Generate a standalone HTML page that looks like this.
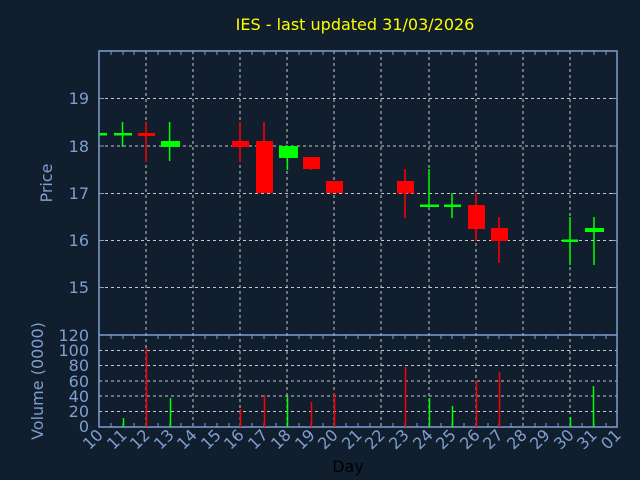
<!DOCTYPE html><html><head><style>html,body{margin:0;background:#101e2e;}svg{display:block}</style></head><body>
<svg width="640" height="480" xmlns="http://www.w3.org/2000/svg" font-family="DejaVu Sans, Liberation Sans, sans-serif">
<rect width="640" height="480" fill="#101e2e"/>
<text x="355" y="30" fill="#ffff00" font-size="16" text-anchor="middle">IES - last updated 31/03/2026</text>
<g stroke="#c8c8c8" stroke-dasharray="3,3" stroke-width="1">
<path d="M99 98.5H617M99 146H617M99 193.5H617M99 240.5H617M99 287.5H617"/>
<path d="M99 350.5H617M99 365.5H617M99 381H617M99 396H617M99 411.5H617"/>
<path d="M146 51V427M193 51V427M240 51V427M287 51V427M334 51V427M381 51V427M429 51V427M476 51V427M523 51V427M570 51V427"/>
</g>
<g stroke="#7f9fcf" stroke-width="1.5" fill="none">
<rect x="99" y="51" width="518" height="376"/>
<path d="M99 335H617"/>
</g>
<g stroke="#7f9fcf" stroke-width="1">
<path d="M111 51v4M123 51v4M134 51v4M158 51v4M170 51v4M181 51v4M205 51v4M217 51v4M229 51v4M252 51v4M264 51v4M276 51v4M299 51v4M311 51v4M323 51v4M346 51v4M358 51v4M370 51v4M393 51v4M405 51v4M417 51v4M441 51v4M452 51v4M464 51v4M488 51v4M499 51v4M511 51v4M535 51v4M546 51v4M558 51v4M582 51v4M594 51v4M606 51v4"/>
<path d="M111 427v-4M123 427v-4M134 427v-4M158 427v-4M170 427v-4M181 427v-4M205 427v-4M217 427v-4M229 427v-4M252 427v-4M264 427v-4M276 427v-4M299 427v-4M311 427v-4M323 427v-4M346 427v-4M358 427v-4M370 427v-4M393 427v-4M405 427v-4M417 427v-4M441 427v-4M452 427v-4M464 427v-4M488 427v-4M499 427v-4M511 427v-4M535 427v-4M546 427v-4M558 427v-4M582 427v-4M594 427v-4M606 427v-4"/>
<path d="M111 335v4M123 335v4M134 335v4M158 335v4M170 335v4M181 335v4M205 335v4M217 335v4M229 335v4M252 335v4M264 335v4M276 335v4M299 335v4M311 335v4M323 335v4M346 335v4M358 335v4M370 335v4M393 335v4M405 335v4M417 335v4M441 335v4M452 335v4M464 335v4M488 335v4M499 335v4M511 335v4M535 335v4M546 335v4M558 335v4M582 335v4M594 335v4M606 335v4"/>
<path d="M99 98.5h5M99 146h5M99 193.5h5M99 240.5h5M99 287.5h5M612 98.5h5M612 146h5M612 193.5h5M612 240.5h5M612 287.5h5"/>
</g>
<g fill="#7f9fcf" font-size="16" text-anchor="end">
<text x="89" y="104">19</text><text x="89" y="152">18</text><text x="89" y="199">17</text><text x="89" y="246">16</text><text x="89" y="293">15</text>
<text x="89" y="341">120</text><text x="89" y="356">100</text><text x="89" y="371">80</text><text x="89" y="387">60</text><text x="89" y="402">40</text><text x="89" y="417">20</text><text x="89" y="432">0</text>
</g>
<text transform="translate(52 183) rotate(-90)" fill="#7f9fcf" font-size="16" text-anchor="middle">Price</text>
<text transform="translate(43 381) rotate(-90)" fill="#7f9fcf" font-size="16" text-anchor="middle">Volume (0000)</text>
<text x="348" y="472" fill="#101e2e" font-size="16" text-anchor="middle" style="fill:#000">Day</text>
<g fill="#7f9fcf" font-size="16" text-anchor="end">
<text transform="translate(104 436) rotate(-45)">10</text>
<text transform="translate(128 436) rotate(-45)">11</text>
<text transform="translate(151 436) rotate(-45)">12</text>
<text transform="translate(175 436) rotate(-45)">13</text>
<text transform="translate(198 436) rotate(-45)">14</text>
<text transform="translate(222 436) rotate(-45)">15</text>
<text transform="translate(245 436) rotate(-45)">16</text>
<text transform="translate(269 436) rotate(-45)">17</text>
<text transform="translate(292 436) rotate(-45)">18</text>
<text transform="translate(316 436) rotate(-45)">19</text>
<text transform="translate(339 436) rotate(-45)">20</text>
<text transform="translate(363 436) rotate(-45)">21</text>
<text transform="translate(386 436) rotate(-45)">22</text>
<text transform="translate(410 436) rotate(-45)">23</text>
<text transform="translate(434 436) rotate(-45)">24</text>
<text transform="translate(457 436) rotate(-45)">25</text>
<text transform="translate(481 436) rotate(-45)">26</text>
<text transform="translate(504 436) rotate(-45)">27</text>
<text transform="translate(528 436) rotate(-45)">28</text>
<text transform="translate(551 436) rotate(-45)">29</text>
<text transform="translate(575 436) rotate(-45)">30</text>
<text transform="translate(598 436) rotate(-45)">31</text>
<text transform="translate(622 436) rotate(-45)">01</text>
</g>
<!-- wicks -->
<g stroke-width="1.5">
<path stroke="#00ff00" d="M122.5 122V147M169.6 122V161M287.4 157V170M429 169V206M452 193V218M570 217V265M594 217V265"/>
<path stroke="#ff0000" d="M146 122V162M240 122V162M264 122V146M311 157V170M405 169V218M476 193V241M499 217V263"/>
</g>
<!-- bodies -->
<g fill="#00ff00">
<rect x="99" y="133" width="8" height="2.5"/>
<rect x="114" y="133" width="18" height="2.5"/>
<rect x="161" y="141" width="19" height="6"/>
<rect x="279" y="146" width="19" height="12"/>
<rect x="420" y="204.5" width="19" height="2.5"/>
<rect x="444" y="204.5" width="17" height="2.5"/>
<rect x="562" y="239.5" width="16" height="2.5"/>
<rect x="585" y="228" width="19" height="4"/>
</g>
<g fill="#ff0000">
<rect x="138" y="133" width="17" height="3"/>
<rect x="232" y="141" width="17" height="6"/>
<rect x="256" y="141" width="17" height="52"/>
<rect x="303" y="157" width="17" height="12"/>
<rect x="326" y="181" width="17" height="12"/>
<rect x="397" y="181" width="17" height="12.5"/>
<rect x="468" y="205" width="17" height="24"/>
<rect x="491" y="228" width="17" height="13"/>
</g>
<!-- volume -->
<g stroke-width="1.5">
<path stroke="#00ff00" d="M123.5 427V418M170.5 427V398M287.5 427V396M429.5 427V398M452.5 427V406M570.5 427V417M593.5 427V386"/>
<path stroke="#ff0000" d="M146.5 427V348M240.5 427V409M264.5 427V395M311.5 427V402M334.5 427V393M405.5 427V367M476.5 427V381M499.5 427V372"/>
</g>
</svg>
</body></html>
